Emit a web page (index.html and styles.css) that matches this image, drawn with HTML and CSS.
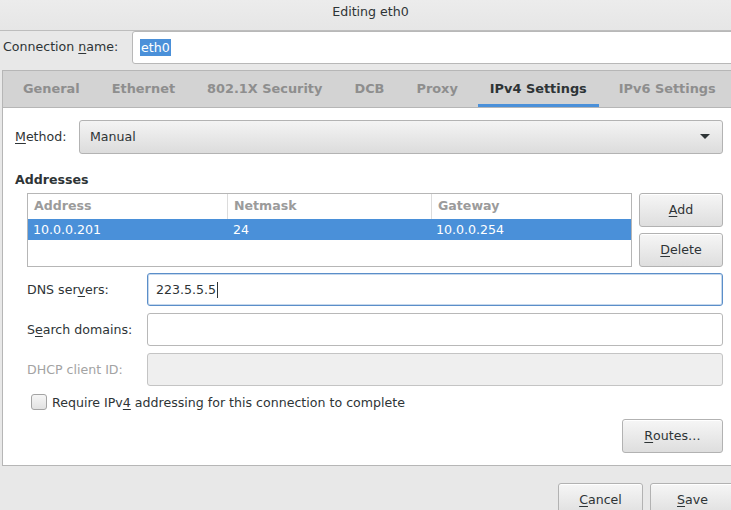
FILE: index.html
```html
<!DOCTYPE html>
<html>
<head>
<meta charset="utf-8">
<link rel="stylesheet" href="styles.css">
</head>
<body>
<div class="dialog">
  <div class="titlebar">Editing eth0</div>
  <div class="namerow">
    <span class="namelabel">Connection <u>n</u>ame:</span>
    <div class="entry nameentry"><span class="sel">eth0</span></div>
  </div>
  <div class="notebook">
    <div class="tabs">
      <div class="tab">General</div>
      <div class="tab">Ethernet</div>
      <div class="tab">802.1X Security</div>
      <div class="tab">DCB</div>
      <div class="tab">Proxy</div>
      <div class="tab active">IPv4 Settings</div>
      <div class="tab">IPv6 Settings</div>
    </div>
    <div class="panel">
      <div class="methodrow">
        <span class="methodlabel"><u>M</u>ethod:</span>
        <div class="combo"><span>Manual</span><span class="arrow"></span></div>
      </div>
      <div class="heading">Addresses</div>
      <div class="addrblock">
        <div class="table">
          <div class="thead">
            <div class="c1">Address</div>
            <div class="c2">Netmask</div>
            <div class="c3">Gateway</div>
          </div>
          <div class="trow selected">
            <div class="c1">10.0.0.201</div>
            <div class="c2">24</div>
            <div class="c3">10.0.0.254</div>
          </div>
        </div>
        <div class="sidebtns">
          <div class="btn"><u>A</u>dd</div>
          <div class="btn"><u>D</u>elete</div>
        </div>
      </div>
      <div class="formrow">
        <span class="flabel">DNS ser<u>v</u>ers:</span>
        <div class="entry focused">223.5.5.5<span class="caret"></span></div>
      </div>
      <div class="formrow">
        <span class="flabel">S<u>e</u>arch domains:</span>
        <div class="entry"></div>
      </div>
      <div class="formrow">
        <span class="flabel disabled">DHCP client ID:</span>
        <div class="entry disabledentry"></div>
      </div>
      <div class="checkrow">
        <span class="checkbox"></span>
        <span>Require IPv<u>4</u> addressing for this connection to complete</span>
      </div>
      <div class="routesrow">
        <div class="btn routes"><u>R</u>outes…</div>
      </div>
    </div>
  </div>
  <div class="actions">
    <div class="btn action"><u>C</u>ancel</div>
    <div class="btn action"><u>S</u>ave</div>
  </div>
</div>
</body>
</html>
```

FILE: styles.css
```css
html, body {
  margin: 0;
  padding: 0;
  overflow: hidden;
  background: #e8e8e8;
}
body {
  font-family: "DejaVu Sans", sans-serif;
  font-size: 12.6px;
  color: #2e3436;
  width: 731px;
  height: 510px;
}
u { text-decoration: underline; text-underline-offset: 2px; }
.dialog {
  width: 741px;
}
.titlebar {
  height: 31px;
  box-sizing: border-box;
  border-bottom: 1px solid #bdbdbd;
  background: linear-gradient(#ececec, #e6e6e6);
  text-align: center;
  line-height: 24px;
}
.namerow {
  display: flex;
  align-items: center;
  height: 33px;
  padding-left: 3px;
}
.namelabel {
  width: 129px;
  padding-bottom: 2px;
}
.entry {
  flex: 1;
  height: 33px;
  box-sizing: border-box;
  border: 1px solid #b8b8b8;
  border-radius: 3px;
  background: #fff;
  display: flex;
  align-items: center;
  padding-left: 8px;
}
.nameentry {
  padding-left: 7px;
}
.sel {
  background: #4a90d9;
  color: #fff;
  padding: 1px 1px;
}
.notebook {
  margin: 6px 2px 0 2px;
  border: 1px solid #b6b6b6;
  background: #fff;
}
.tabs {
  display: flex;
  gap: 8px;
  padding-left: 8px;
  height: 36px;
  background: #d3d3d3;
  border-bottom: 1px solid #b6b6b6;
}
.tab {
  padding: 0 12px;
  font-weight: bold;
  font-size: 12.9px;
  color: #8e8e8e;
  display: flex;
  align-items: center;
  box-sizing: border-box;
  border-bottom: 3px solid transparent;
  padding-top: 1px;
}
.tab.active {
  color: #2e3436;
  border-bottom-color: #4a90d9;
}
.panel {
  padding: 12px 15px 12px 12px;
}
.methodrow {
  display: flex;
  align-items: center;
  height: 34px;
}
.methodlabel {
  width: 64px;
  padding-bottom: 2px;
}
.combo {
  flex: 1;
  height: 34px;
  box-sizing: border-box;
  border: 1px solid #b3b3b3;
  border-radius: 3px;
  background: linear-gradient(#f4f4f4, #dcdcdc);
  display: flex;
  align-items: center;
  justify-content: space-between;
  padding: 0 12px 2px 10px;
}
.arrow {
  width: 0;
  height: 0;
  border-left: 5px solid transparent;
  border-right: 5px solid transparent;
  border-top: 5px solid #2e3436;
}
.heading {
  font-weight: bold;
  margin-top: 17px;
  line-height: 18px;
  height: 16px;
}
.addrblock {
  display: flex;
  gap: 7px;
  margin-top: 6px;
  margin-left: 12px;
}
.table {
  flex: 1;
  height: 74px;
  box-sizing: border-box;
  border: 1px solid #b6b6b6;
  background: #fff;
}
.thead, .trow {
  display: grid;
  grid-template-columns: 199px 204px 1fr;
}
.thead {
  height: 25px;
  color: #9b9b9b;
  font-weight: bold;
}
.thead > div {
  display: flex;
  align-items: center;
  padding-left: 6px;
  padding-bottom: 2px;
  border-left: 1px solid #dcdcdc;
}
.thead > .c1 { border-left: none; }
.trow {
  height: 21px;
}
.trow > div {
  display: flex;
  align-items: center;
  padding-left: 5px;
}
.trow > .c2 { padding-left: 6px; }
.trow.selected {
  background: #4a90d9;
  color: #fff;
}
.sidebtns {
  display: flex;
  flex-direction: column;
  gap: 6px;
  width: 84px;
}
.btn {
  height: 34px;
  box-sizing: border-box;
  border: 1px solid #b2b2b2;
  border-radius: 3px;
  background: linear-gradient(#f6f6f6, #dedede);
  box-shadow: inset 0 1px #fff;
  display: flex;
  align-items: center;
  justify-content: center;
  padding-bottom: 2px;
}
.formrow {
  display: flex;
  align-items: center;
  margin-left: 12px;
  margin-top: 7px;
}
.addrblock + .formrow { margin-top: 6px; }
.flabel {
  width: 120px;
}
.flabel.disabled {
  color: #a3a3a3;
}
.focused {
  border-color: #5b8ec9;
  box-shadow: inset 0 0 0 1px rgba(91,142,201,0.35);
}
.caret {
  display: inline-block;
  width: 1px;
  height: 16px;
  background: #2e3436;
  margin-left: 1px;
}
.disabledentry {
  background: #efefef;
  border-color: #c4c4c4;
}
.checkrow {
  display: flex;
  align-items: center;
  gap: 5px;
  margin-top: 8px;
  margin-left: 16px;
  height: 16px;
}
.checkbox {
  width: 16px;
  height: 16px;
  box-sizing: border-box;
  border: 1px solid #a4a4a4;
  border-radius: 3px;
  background: linear-gradient(#f6f6f6, #e2e2e2);
}
.routesrow {
  display: flex;
  justify-content: flex-end;
  margin-top: 9px;
}
.routes {
  width: 101px;
}
.actions {
  display: flex;
  justify-content: flex-end;
  gap: 7px;
  margin-top: 17px;
  padding-right: 6px;
}
.action {
  width: 85px;
  height: 34px;
}
```
